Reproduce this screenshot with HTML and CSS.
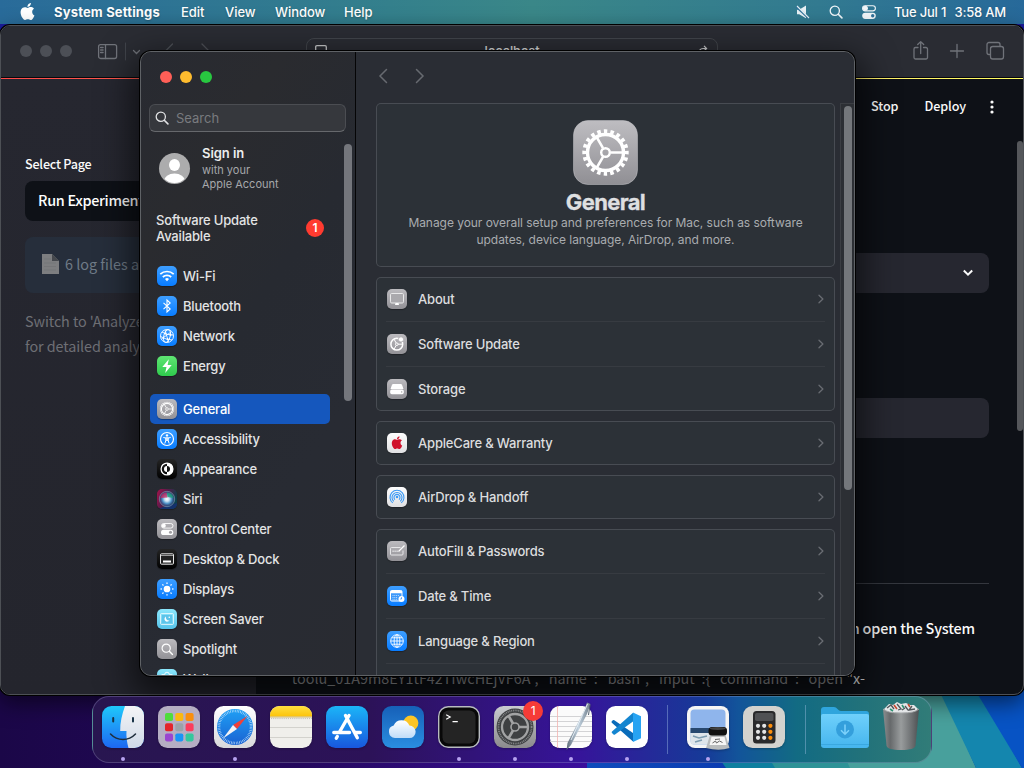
FILE: index.html
```html
<!DOCTYPE html>
<html lang="en">
<head>
<meta charset="utf-8">
<title>System Settings</title>
<link rel="stylesheet" href="styles.css">
</head>
<body>
<svg class="defs" width="0" height="0">
  <defs>
    <linearGradient id="gray" x2="0" y2="1"><stop offset="0" stop-color="#bebdc1"/><stop offset="1" stop-color="#908f94"/></linearGradient>
    <linearGradient id="steel" x2="0" y2="1"><stop offset="0" stop-color="#c9ccd0"/><stop offset="1" stop-color="#8b8a8c"/></linearGradient>
    <linearGradient id="finder" x2="0" y2="1"><stop offset="0" stop-color="#1fc8fb"/><stop offset="1" stop-color="#1d67f2"/></linearGradient>
    <linearGradient id="face" x2="0" y2="1"><stop offset="0" stop-color="#f4f4f6"/><stop offset="1" stop-color="#cfdae8"/></linearGradient>
    <linearGradient id="white" x2="0" y2="1"><stop offset="0" stop-color="#fff"/><stop offset="1" stop-color="#d8d8da"/></linearGradient>
    <linearGradient id="sea" x2="0" y2="1"><stop offset="0" stop-color="#1fa0f5"/><stop offset="1" stop-color="#1a62d2"/></linearGradient>
    <linearGradient id="store" x2="0" y2="1"><stop offset="0" stop-color="#1bb5f8"/><stop offset="1" stop-color="#1857dd"/></linearGradient>
    <linearGradient id="sky" x2="0" y2="1"><stop offset="0" stop-color="#1660b8"/><stop offset="1" stop-color="#2a8ee0"/></linearGradient>
    <linearGradient id="note" x2="0" y2="1"><stop offset="0" stop-color="#ffdf3f"/><stop offset="1" stop-color="#fcc30b"/></linearGradient>
    <linearGradient id="folder" x2="0" y2="1"><stop offset="0" stop-color="#6fd0fb"/><stop offset="1" stop-color="#45b5ee"/></linearGradient>
    <linearGradient id="bin"><stop offset="0" stop-color="#8b8e90"/><stop offset=".2" stop-color="#66696b"/><stop offset=".5" stop-color="#999c9d"/><stop offset=".8" stop-color="#6c6f71"/><stop offset="1" stop-color="#4d5052"/></linearGradient>
    <linearGradient id="cloud" x2="0" y2="1"><stop offset="0" stop-color="#fff"/><stop offset="1" stop-color="#bfdcf8"/></linearGradient>
    <linearGradient id="pen"><stop offset="0" stop-color="#5d6b78"/><stop offset=".5" stop-color="#c3d3e0"/><stop offset="1" stop-color="#6b7a88"/></linearGradient>
    <radialGradient id="siri"><stop offset="0" stop-color="#fff"/><stop offset=".3" stop-color="#c9dff2"/><stop offset=".6" stop-color="#4f93c8"/><stop offset="1" stop-color="#273b75" stop-opacity=".5"/></radialGradient>
    <linearGradient id="siribg" x2="1" y2=".4"><stop offset="0" stop-color="#a8124b"/><stop offset=".45" stop-color="#5c1a4a"/><stop offset="1" stop-color="#0c3f4c"/></linearGradient>
    <symbol id="apple" viewBox="0 0 24 24"><path d="M12.152 6.896c-.948 0-2.415-1.078-3.96-1.04-2.04.027-3.91 1.183-4.961 3.014-2.117 3.675-.546 9.103 1.519 12.09 1.013 1.454 2.208 3.09 3.792 3.039 1.52-.065 2.09-.987 3.935-.987 1.831 0 2.35.987 3.96.948 1.637-.026 2.676-1.48 3.676-2.948 1.156-1.688 1.636-3.325 1.662-3.415-.039-.013-3.182-1.221-3.22-4.857-.026-3.04 2.48-4.494 2.597-4.559-1.429-2.09-3.623-2.324-4.39-2.376-2-.156-3.675 1.09-4.61 1.09zM15.53 3.83c.843-1.012 1.4-2.427 1.245-3.83-1.207.052-2.662.805-3.532 1.818-.78.896-1.454 2.338-1.273 3.714 1.338.104 2.715-.688 3.559-1.701"/></symbol>
    <symbol id="lens" viewBox="0 0 14 14"><g fill="none" stroke="currentColor" stroke-linecap="round"><circle cx="5.8" cy="5.8" r="4.6" stroke-width="1.3"/><path d="M9.3 9.3l3.6 3.6" stroke-width="1.6"/></g></symbol>
    <symbol id="gear" viewBox="0 0 48 48"><g fill="none" stroke="currentColor"><circle cx="24" cy="24" r="21.2" stroke-width="4" pathLength="40" stroke-dasharray="1.05 .95" stroke-dashoffset=".5"/><circle cx="24" cy="24" r="18" stroke-width="3.4"/><circle cx="24" cy="24" r="4.3" stroke-width="2.4"/><path d="M29 24h13M21.5 19.7L15 8.4M21.5 28.3L15 39.6" stroke-width="2.6"/></g></symbol>
    <symbol id="globe" viewBox="0 0 20 20"><g fill="none" stroke="#fff" stroke-width=".9"><circle cx="10" cy="10" r="6.3"/><ellipse cx="10" cy="10" rx="2.9" ry="6.3"/><path d="M10 3.7v12.6M3.7 10h12.6M4.8 6.8h10.4M4.8 13.2h10.4"/></g></symbol>
    <symbol id="switches" viewBox="0 0 14 14"><rect x=".6" y=".7" width="12.800" height="5.200" rx="2.600" fill="none" stroke="currentColor" stroke-width="1.100"/><circle cx="3.400" cy="3.300" r="2.500" fill="currentColor"/><rect x=".2" y="7.700" width="13.600" height="6.200" rx="3.100" fill="currentColor"/><circle cx="10.700" cy="10.800" r="1.700" fill="#30729a"/></symbol>
    <symbol id="chev" viewBox="0 0 8 12"><path d="M2 2.200L5.900 6 2 9.800" fill="none" stroke="currentColor" stroke-width="1.3" stroke-linecap="round" stroke-linejoin="round"/></symbol>
  </defs>
</svg>

<div class="desktop">
  <svg class="wallpaper" viewBox="0 0 1024 768">
    <defs>
      <linearGradient id="wl"><stop offset="0" stop-color="#1b0748"/><stop offset=".5" stop-color="#24085c"/><stop offset="1" stop-color="#3c0fa0"/></linearGradient>
      <linearGradient id="wm"><stop offset="0" stop-color="#0f4cbc"/><stop offset="1" stop-color="#0b3bb0"/></linearGradient>
    </defs>
    <rect width="1024" height="768" fill="#1b1c9c"/>
    <rect y="600" width="600" height="168" fill="url(#wl)"/>
    <path d="M587 600v168h150l-60-168z" fill="url(#wm)"/>
    <path d="M650 660l76 108h60l-50-108z" fill="#0e7f9f"/>
    <path d="M700 640l75 128h100l-70-128z" fill="#2e9397"/>
    <path d="M790 640l60 128h126L920 640z" fill="#48a09c"/>
    <path d="M915 640l61 128h46l-70-128z" fill="#1486ae"/>
    <path d="M945 640l77 128h2V600z" fill="#0753c4"/>
  </svg>

  <header class="menubar">
    <div class="menus">
      <svg class="logo" fill="#fff"><use href="#apple"/></svg>
      <b class="app">System Settings</b><span class="m1">Edit</span><span class="m2">View</span><span class="m3">Window</span><span class="m4">Help</span>
    </div>
    <div class="status">
      <svg width="14" height="14" viewBox="0 0 14 14"><path d="M1 4.7h2.2L10 .6v12.6L3.2 9.3H1z" fill="#e8f1f5"/><path d="M.3 1.7l12.4 11.6" stroke="#30729a" stroke-width="2.2"/><path d="M1 1l12 12" stroke="#e8f1f5" stroke-width="1.1"/></svg>
      <svg width="14" height="14" color="#f1f6f9"><use href="#lens"/></svg>
      <svg width="14" height="14" color="#f1f6f9"><use href="#switches"/></svg>
      <span class="clock"><span>Tue Jul 1</span><span>3:58 AM</span></span>
    </div>
  </header>

  <section class="browser">
    <div class="toolbar">
      <div class="dots"><i></i><i></i><i></i></div>
      <svg class="nav" width="130" height="24" viewBox="0 0 130 24" fill="none" stroke="#70737a" stroke-width="1.3" stroke-linecap="round"><rect x="1.6" y="4.600" width="18" height="13.900" rx="2"/><path d="M8.500 4.600v13.900M3.600 7.500h2.500M3.600 10h2.500M3.600 12.500h2.500"/><path d="M28.500 3v17" stroke="#41444b" stroke-width="1"/><path d="M36.500 10.500l3 3 3-3"/><path d="M75.500 4l-7 7 7 7M105 4l7 7-7 7" stroke="#4f5259"/></svg>
      <div class="address"><svg width="12" height="12" viewBox="0 0 12 12" fill="none" stroke="#c9cacc" stroke-width="1.3"><rect x=".7" y=".7" width="10.600" height="8" rx="1.200"/></svg><span>localhost</span><svg width="12" height="12" viewBox="0 0 12 12" fill="none" stroke="#c9cacc" stroke-width="1.200"><path d="M10.500 6.800A4.500 4.500 0 1 1 6 3.500h3M7 .8l2.600 2.700L7 6"/></svg></div>
      <svg class="tools" width="96" height="24" viewBox="0 0 96 24" fill="none" stroke="#70737a" stroke-width="1.300" stroke-linecap="round" stroke-linejoin="round"><path d="M6 7.500H3.500a1.500 1.500 0 0 0-1.500 1.500v8.500a1.500 1.500 0 0 0 1.500 1.500h10.500a1.500 1.500 0 0 0 1.500-1.500V9a1.500 1.500 0 0 0-1.500-1.500h-2.500M8.700 13.500V1.800M5.700 4.500l3-2.900 3 2.900M45 4.500v13M38.500 11h13"/><rect x="78.500" y="6.500" width="13" height="12.500" rx="2.200"/><path d="M78 14.500h-1a2 2 0 0 1-2-2v-8a2 2 0 0 1 2-2h9a2 2 0 0 1 2 2v1.500"/></svg>
    </div>
    <div class="page">
      <aside class="side">
        <label>Select Page</label>
        <div class="pick">Run Experiment</div>
        <div class="info"><svg width="17" height="20" viewBox="0 0 17 20"><path d="M0 0h10l7 7v13H0z" fill="#7d7e80"/><path d="M10 0v7h7z" fill="#45484d"/><path d="M2 5h7M2 9h12M2 12.500h12M2 16h12" stroke="#757678"/></svg><span>6 log files available</span></div>
        <p>Switch to 'Analyze Logs'<br>for detailed analysis</p>
      </aside>
      <main class="main">
        <div class="actions"><span>Stop</span><span>Deploy</span><svg width="4" height="14" viewBox="0 0 4 14" fill="#fafafa"><circle cx="2" cy="2" r="1.600"/><circle cx="2" cy="7" r="1.600"/><circle cx="2" cy="12" r="1.600"/></svg></div>
        <div class="field first"><svg width="12" height="8" viewBox="0 0 12 8"><path d="M1.800 1.500L6 5.700l4.200-4.200" fill="none" stroke="#fafafa" stroke-width="2"/></svg></div>
        <div class="field second"></div>
        <hr>
        <p class="msg">then open the System</p>
        <p class="code"><span>"toolu_01A9m8EY1tF42TfwcHEjVF6A", "name": "bash", "input":{ "command": "open </span><b>"x-</b></p>
      </main>
      <div class="pagebar"></div>
    </div>
  </section>

  <section class="settings">
    <aside class="sidebar">
      <div class="lights"><i></i><i></i><i></i></div>
      <div class="search"><svg width="14" height="14" color="#e0e1e3"><use href="#lens"/></svg><span>Search</span></div>
      <div class="scroll">
        <div class="list">
          <div class="account"><svg width="31" height="31" viewBox="0 0 31 31"><defs><clipPath id="av"><circle cx="15.500" cy="15.500" r="14.500"/></clipPath></defs><circle cx="15.500" cy="15.500" r="15.500" fill="#acacad"/><g fill="#fff" clip-path="url(#av)"><ellipse cx="15.500" cy="12" rx="5.500" ry="6"/><ellipse cx="15.500" cy="28" rx="10.500" ry="7.500"/></g></svg><div><b>Sign in</b><span>with your</span><span>Apple Account</span></div></div>
          <div class="update"><span>Software Update<br>Available</span><em>1</em></div>
          <ul>
            <li><svg class="ic blue" viewBox="0 0 20 20" fill="none" stroke="#fff" stroke-width="1.700"><path d="M3.300 8.200a9.600 9.600 0 0 1 13.400 0M5.800 11a6.200 6.200 0 0 1 8.400 0"/><path d="M10 15.200l-2-2.200a3 3 0 0 1 4 0z" fill="#fff" stroke="none"/></svg><span>Wi-Fi</span></li>
            <li><svg class="ic blue" viewBox="0 0 20 20" fill="none" stroke="#fff" stroke-width="1.100"><path d="M6.500 6.800l6.700 6.200L10 16V4l3.200 3-6.700 6.200"/></svg><span>Bluetooth</span></li>
            <li><svg class="ic blue" viewBox="0 0 20 20"><g fill="none" stroke="#fff" stroke-width=".9"><circle cx="10" cy="10" r="6.500"/><ellipse cx="10" cy="10" rx="3.200" ry="6.500" transform="rotate(15 10 10)"/><path d="M5 6q4 3 11 3M3.600 10.500q6 3.500 11.500 3.500M8 4l3.500 12M4.500 13l9.500-7"/></g><g fill="#fff"><circle cx="8.500" cy="7.500" r="1"/><circle cx="13.500" cy="9" r="1"/><circle cx="10.500" cy="13" r="1"/></g></svg><span>Network</span></li>
            <li><svg class="ic green" viewBox="0 0 20 20"><path d="M11.800 3.200L5.300 11h4.200l-1.300 6 6.500-8h-4.100z" fill="#fff"/></svg><span>Energy</span></li>
          </ul>
          <ul>
            <li class="on"><svg class="ic gray" viewBox="0 0 20 20" color="#fff"><use href="#gear" x="2.500" y="2.500" width="15" height="15"/></svg><span>General</span></li>
            <li><svg class="ic blue" viewBox="0 0 20 20"><circle cx="10" cy="10" r="6.500" fill="none" stroke="#fff" stroke-width="1.200"/><circle cx="10" cy="6.400" r="1.200" fill="#fff"/><path d="M6.300 8.500l2.700.5v2l-1.200 3.500M13.700 8.500l-2.700.5v2l1.200 3.500M9 8.800h2v2.500H9z" fill="none" stroke="#fff"/></svg><span>Accessibility</span></li>
            <li><svg class="ic black" viewBox="0 0 20 20"><circle cx="10" cy="10" r="5.900" fill="none" stroke="#fff" stroke-width="1.300"/><path d="M10 4.100a5.900 5.900 0 0 1 0 11.800z" fill="#fff"/><path d="M10 7a3 3 0 0 0 0 6z" fill="#fff"/><path d="M10 7a3 3 0 0 1 0 6z" fill="#111"/></svg><span>Appearance</span></li>
            <li><svg class="ic" viewBox="0 0 20 20"><rect width="20" height="20" fill="url(#siribg)"/><path d="M0 20h20v-6z" fill="#14316c"/><circle cx="10" cy="10" r="7.700" fill="url(#siri)"/><path d="M3.500 9a7 7 0 0 1 6-5.500l1 5z" fill="#c8285e" opacity=".75"/><path d="M10 3.500a7 7 0 0 1 6.500 5.500l-6-1z" fill="#1d9c77" opacity=".8"/><circle cx="10" cy="10" r="7.700" fill="none" stroke="#8aa6b8" stroke-width=".6"/></svg><span>Siri</span></li>
            <li><svg class="ic gray" viewBox="0 0 20 20"><rect x="4.500" y="4.500" width="11.500" height="4.600" rx="2.300" fill="none" stroke="#fff" stroke-width=".9"/><circle cx="6.800" cy="6.800" r="2" fill="#fff"/><rect x="4" y="10.700" width="12.300" height="5.300" rx="2.600" fill="#fff"/><circle cx="13.500" cy="13.300" r="1.500" fill="#a09fa3"/></svg><span>Control Center</span></li>
            <li><svg class="ic black" viewBox="0 0 20 20"><rect x="3.500" y="4.800" width="13" height="10.400" rx="1" fill="#222" stroke="#e5e5e5"/><path d="M4 6.500h12" stroke="#999"/><path d="M6 12.500h8" stroke="#fff" stroke-width="2"/></svg><span>Desktop &amp; Dock</span></li>
            <li><svg class="ic blue" viewBox="0 0 20 20" stroke="#fff" stroke-width="1.300" stroke-linecap="round"><circle cx="10" cy="10" r="2.700" fill="#fff"/><path d="M10 4v.4M10 15.600v.4M4 10h.4M15.600 10h.4M5.800 5.800l.3.300M13.900 13.900l.3.300M5.800 14.200l.3-.3M13.900 6.100l.3-.3"/></svg><span>Displays</span></li>
            <li><svg class="ic cyan" viewBox="0 0 20 20"><rect x="3.600" y="4.600" width="12.800" height="10.800" rx=".8" fill="none" stroke="#fff" stroke-width=".8"/><rect x="5" y="6" width="10" height="8" fill="#5cc4ea"/><path d="M9 7.500a2.700 2.700 0 1 0 3.500 3.800A2.900 2.900 0 0 1 9 7.500z" fill="#fff"/><circle cx="12.300" cy="8.300" r=".8" fill="#fff"/></svg><span>Screen Saver</span></li>
            <li><svg class="ic gray" viewBox="0 0 20 20" color="#fff"><use href="#lens" x="4" y="4" width="12.500" height="12.500"/></svg><span>Spotlight</span></li>
            <li><svg class="ic cyan" viewBox="0 0 20 20" fill="none" stroke="#fff" stroke-width=".9"><circle cx="10" cy="10" r="2"/><circle cx="10" cy="5.500" r="2.300"/><circle cx="6" cy="7.800" r="2.300"/><circle cx="14" cy="7.800" r="2.300"/></svg><span>Wallpaper</span></li>
          </ul>
        </div>
        <div class="thumb"></div>
      </div>
    </aside>

    <div class="content">
      <nav><svg width="10" height="16" viewBox="0 0 10 16"><path d="M8.500 1.500L2 8l6.500 6.500" fill="none" stroke="#676a70" stroke-width="1.500" stroke-linecap="round"/></svg><svg width="10" height="16" viewBox="0 0 10 16"><path d="M1.500 1.500L8 8l-6.500 6.500" fill="none" stroke="#676a70" stroke-width="1.500" stroke-linecap="round"/></svg></nav>
      <div class="body">
        <div class="cards">
          <div class="card hero"><svg width="65" height="65" viewBox="0 0 65 65" color="#fff"><rect x=".5" y=".5" width="64" height="64" rx="14.500" fill="url(#gray)" stroke="#c6c5c9" stroke-opacity=".5"/><use href="#gear" x="8.500" y="8.500" width="48" height="48"/></svg><h1>General</h1><p>Manage your overall setup and preferences for Mac, such as software<br><span>updates, device language, AirDrop, and more.</span></p></div>
          <div class="card">
            <div class="row"><svg class="ic gray" viewBox="0 0 20 20"><rect x="3.500" y="4.500" width="13" height="9.500" rx="1.200" fill="#aaa9ad" stroke="#e9e9ea" stroke-width="1"/><path d="M8.500 14h3l.5 2h-4z" fill="#fff"/></svg><span>About</span><svg class="go"><use href="#chev"/></svg></div>
            <div class="row"><svg class="ic gray" viewBox="0 0 20 20" fill="none" stroke="#fff"><circle cx="9.800" cy="10.200" r="5.900" stroke-width="1.500"/><circle cx="9.800" cy="10.200" r="1.300"/><path d="M11 10.200h4M9.200 9L7 5.200M9.200 11.400L7 15.200"/><circle cx="14" cy="5.400" r="2.600" fill="#fff" stroke="#a9a8ac" stroke-width=".8"/></svg><span>Software Update</span><svg class="go"><use href="#chev"/></svg></div>
            <div class="row"><svg class="ic gray" viewBox="0 0 20 20"><path d="M6.200 5h7.600q.8 0 1.200.8L16.500 10H3.500L5 5.800Q5.400 5 6.200 5z" fill="#fff"/><rect x="3.200" y="10.500" width="13.600" height="4.700" rx="1.600" fill="#fff"/><circle cx="14.700" cy="12.900" r=".7" fill="#999"/></svg><span>Storage</span><svg class="go"><use href="#chev"/></svg></div>
          </div>
          <div class="card"><div class="row"><svg class="ic pale" viewBox="0 0 20 20" fill="#d0122c"><use href="#apple" x="3.600" y="3.200" width="12.800" height="12.800"/></svg><span>AppleCare &amp; Warranty</span><svg class="go"><use href="#chev"/></svg></div></div>
          <div class="card"><div class="row"><svg class="ic pale" viewBox="0 0 20 20" fill="none" stroke="#3b9af5" stroke-width="1.100"><circle cx="10" cy="10" r="1.300" fill="#3b9af5" stroke="none"/><path d="M8 12.600a3 3 0 1 1 4 0M6.800 14.300a5 5 0 1 1 6.400 0M5.800 15.900a7 7 0 1 1 8.400 0"/></svg><span>AirDrop &amp; Handoff</span><svg class="go"><use href="#chev"/></svg></div></div>
          <div class="card">
            <div class="row"><svg class="ic gray" viewBox="0 0 20 20" fill="none" stroke="#e6e6e8"><path d="M13.500 6.500h-9q-1 0-1 1v5.500q0 1 1 1h10.500q1 0 1-1v-3.500"/><path d="M5.500 10.300h6" stroke-width="1.600" stroke-dasharray="1.200 .8"/><path d="M17.500 4.500l-6 6" stroke="#fff" stroke-width="1.300"/></svg><span>AutoFill &amp; Passwords</span><svg class="go"><use href="#chev"/></svg></div>
            <div class="row"><svg class="ic blue" viewBox="0 0 20 20"><rect x="3.500" y="4.500" width="11.500" height="10.500" rx="1.200" fill="#3d98fa" stroke="#fff" stroke-width="1"/><path d="M3.500 6h11.500" stroke="#fff" stroke-width="2.500"/><path d="M5.500 9.500h7M5.500 11.500h5M5.500 13.300h5" stroke="#b5dafd" stroke-width="1" stroke-dasharray="1 .8"/><circle cx="14.500" cy="13" r="3" fill="#fff"/><path d="M14.500 11.200V13h-1.300" fill="none" stroke="#1683fc" stroke-width=".7"/></svg><span>Date &amp; Time</span><svg class="go"><use href="#chev"/></svg></div>
            <div class="row"><svg class="ic blue" viewBox="0 0 20 20"><use href="#globe"/></svg><span>Language &amp; Region</span><svg class="go"><use href="#chev"/></svg></div>
            <div class="row"></div>
          </div>
        </div>
        <div class="track"><div></div></div>
      </div>
    </div>
  </section>

  <footer class="dock">
    <div class="tile run"><svg viewBox="0 0 42 42"><defs><clipPath id="r"><rect width="42" height="42" rx="9.500"/></clipPath></defs><g clip-path="url(#r)"><rect width="42" height="42" fill="url(#finder)"/><path d="M23 0c-3 8-5 17-4.800 25h6.300c-.5 5 .5 12 2 17H42V0z" fill="url(#face)"/></g><path d="M11.200 12v3.500M31 12v3.500" stroke="#173246" stroke-width="2" stroke-linecap="round"/><path d="M8.500 28c7 7.300 18 7.300 25 0" fill="none" stroke="#1e2e3c" stroke-width="1.500" stroke-linecap="round"/></svg></div>
    <div class="tile"><svg viewBox="0 0 42 42"><rect width="42" height="42" rx="9.500" fill="#b5aec3"/><g><rect x="7" y="7" width="8" height="8" rx="1.800" fill="#4fdc3c"/><rect x="17.300" y="7" width="8" height="8" rx="1.800" fill="#fbb810"/><rect x="27.600" y="7" width="8" height="8" rx="1.800" fill="#f98f0e"/><rect x="7" y="17.200" width="8" height="8" rx="1.800" fill="#e3242a"/><rect x="17.300" y="17.200" width="8" height="8" rx="1.800" fill="#9ca2a8"/><rect x="27.600" y="17.200" width="8" height="8" rx="1.800" fill="#fb3d5c"/><rect x="7" y="27.400" width="8" height="8" rx="1.800" fill="#9a46d0"/><rect x="17.300" y="27.400" width="8" height="8" rx="1.800" fill="#1a94f5"/><rect x="27.600" y="27.400" width="8" height="8" rx="1.800" fill="#34c79c"/></g></svg></div>
    <div class="tile run"><svg viewBox="0 0 42 42"><rect width="42" height="42" rx="9.500" fill="url(#white)"/><circle cx="21" cy="21" r="18" fill="url(#sea)"/><circle cx="21" cy="21" r="16" fill="none" stroke="#c5e3fb" stroke-width="2.600" stroke-dasharray=".6 1.070"/><path d="M33.500 10L19 19l4 4z" fill="#f04038"/><path d="M9 32.500L19 19l4 4z" fill="#f3f3f5"/></svg></div>
    <div class="tile"><svg viewBox="0 0 42 42"><g clip-path="url(#r)"><rect width="42" height="42" fill="#f0efeb"/><rect width="42" height="10.500" fill="url(#note)"/><path d="M0 11h42" stroke="#c9a94c" stroke-width=".8"/><path d="M1 12.600h41" stroke="#b5b3ac" stroke-width=".9" stroke-dasharray=".9 1"/><path d="M0 21.500h42M0 31.500h42" stroke="#cfcec9" stroke-width=".9"/></g></svg></div>
    <div class="tile"><svg viewBox="0 0 42 42"><rect width="42" height="42" rx="9.500" fill="url(#store)"/><g fill="none" stroke="#fff" stroke-width="3.400" stroke-linecap="round"><path d="M19.500 9.500l11.800 22.300M23 9.500L13.500 26M7.800 26.500h15.700M29.500 26.500h4.800M11.300 30.500l-1 1.700"/></g></svg></div>
    <div class="tile"><svg viewBox="0 0 42 42"><rect width="42" height="42" rx="9.500" fill="url(#sky)"/><circle cx="28.800" cy="17" r="7.600" fill="#fcc526"/><path d="M13 32a6.300 6.300 0 0 1-1.300-12.400 8.500 8.500 0 0 1 15.700 0A6.200 6.200 0 0 1 27.500 32z" fill="url(#cloud)"/></svg></div>
    <div class="tile run"><svg viewBox="0 0 42 42"><rect x=".7" y=".7" width="40.600" height="40.600" rx="9.500" fill="#080808" stroke="#b8bcc0" stroke-width="1.400"/><rect x="4.500" y="4.500" width="33" height="33" rx="6" fill="#242424"/><path d="M8.200 8.700l4 2.300-4 2.300M14.500 15.700h5.300" fill="none" stroke="#fff" stroke-width="1.200"/></svg></div>
    <div class="tile run"><svg viewBox="0 0 42 42"><rect width="42" height="42" rx="9.500" fill="url(#steel)"/><circle cx="21" cy="21" r="18.500" fill="#3e4042"/><g fill="none" stroke="#a2a3a4"><circle cx="21" cy="21" r="16.600" stroke-width="1.800" stroke-dasharray="1 .8" stroke="#838587"/><circle cx="21" cy="21" r="13" stroke-width="2.300"/><circle cx="21" cy="21" r="4" stroke-width="1.600"/><path d="M25 21h9M19 17.500l-4.600-8M19 24.500l-4.600 8" stroke-width="2.600"/></g></svg><em>1</em></div>
    <div class="tile run"><svg viewBox="0 0 42 42"><rect width="42" height="42" rx="9.500" fill="#fbfbfb"/><path d="M0 10.500h42M0 15.500h42M0 20.500h42M0 25.500h42M0 30.500h42M0 35.500h42" stroke="#c9c9cb" stroke-width=".8"/><path d="M7.500 0v42" stroke="#f4b4b0" stroke-width=".8"/><path d="M37 -3.500l3.500 1.500L37 8 21 39l-4.500 5 1-7L34 5z" fill="url(#pen)"/><path d="M37.500-2L21 34" stroke="#e9f1f7" stroke-width=".9"/><path d="M40-1l-1.500 10" stroke="#55626f" stroke-width="1"/></svg></div>
    <div class="tile run"><svg viewBox="0 0 42 42"><rect width="42" height="42" rx="9.500" fill="#fff"/><path d="M8.300 14.300q-.7-.6-1.500 0l-1 1q-.7.800 0 1.500L27 35.500V27z" fill="#0a6cba"/><path d="M6 25.500q-.8.800 0 1.600l1.500 1.300q.8.500 1.500 0L27 15.500V6.800z" fill="#1485d0"/><path d="M27 6.500l8 3.800v22L27 36z" fill="#27a3f2"/></svg></div>
    <div class="sep s1"></div>
    <div class="tile run"><svg viewBox="0 0 42 42"><rect width="42" height="42" rx="8" fill="#f5f5f5"/><rect x="3.500" y="3.500" width="35" height="35" rx="4" fill="#8fb5ec"/><path d="M3.500 22h35v5h-35z" fill="#28486f"/><path d="M3.500 27h35v8q0 3.500-3.500 3.500H7Q3.500 38.500 3.500 35z" fill="#dfe5ea"/><path d="M6 30l6 2 8-2M8 36l7-2" fill="none" stroke="#7d9cb0" stroke-width="1.500"/><path d="M23 29h15.500l4 13q-10.500 3.500-23.500 0z" fill="#b9bcbd"/><path d="M24.500 31h13l2 8H22.500z" fill="#f5f5f5"/><path d="M25.500 37l3-2 1 2 3-2 3 1.500M28 33.500l5-.5" fill="none" stroke="#666"/><rect x="21.500" y="21" width="18.500" height="8.500" rx="3.500" fill="#111"/><ellipse cx="30.700" cy="22.500" rx="8" ry="1.400" fill="#444"/></svg></div>
    <div class="tile"><svg viewBox="0 0 42 42"><rect width="42" height="42" rx="9.500" fill="#d3d2ce"/><rect x="10" y="5" width="22.500" height="32.500" rx="3.500" fill="#2a2a2b"/><rect x="12" y="7" width="18.500" height="8" rx="1.800" fill="#505153"/><g fill="#e4e4e4"><circle cx="15" cy="19.800" r="2.100"/><circle cx="21.200" cy="19.800" r="2.100"/><circle cx="15" cy="25.800" r="2.100"/><circle cx="21.200" cy="25.800" r="2.100"/><circle cx="15" cy="31.800" r="2.100"/><circle cx="21.200" cy="31.800" r="2.100"/></g><g fill="#fc8e0c"><circle cx="27.400" cy="19.800" r="2.100"/><circle cx="27.400" cy="25.800" r="2.100"/><circle cx="27.400" cy="31.800" r="2.100"/></g></svg></div>
    <div class="sep s2"></div>
    <div class="folder"><svg width="48" height="42" viewBox="0 0 48 42"><path d="M0 4q0-3 3-3h10q2 0 3.500 2t3.500 2h25q3 0 3 3v10H0z" fill="#2fa5dd"/><path d="M0 10q0-2 2-2h44q2 0 2 2v29q0 3-3 3H3q-3 0-3-3z" fill="url(#folder)"/><path d="M0 38.500h48" stroke="#3aa8e0"/><circle cx="24" cy="23.500" r="9" fill="#349fdc"/><path d="M24 18.500v9.500M20 24.300l4 4 4-4" fill="none" stroke="#7dd2fb" stroke-width="1.500"/></svg></div>
    <div class="trash"><svg width="38" height="49" viewBox="0 0 38 49"><path d="M1 7l3.500 36.500Q5 48 19 48t14.500-4.500L37 7z" fill="url(#bin)"/><path d="M2 7l3-3 2-2 4 1 4-3 4 2 5-1 4 2 4 0 4 4q-2 4-17 4T2 7z" fill="#e4e6e8"/><path d="M5 6l4-3 3 4M15 2l4 5-3 1M23 4l3 4M30 4l-3 4 6-1M20 8l3-2" fill="none" stroke="#51565a" stroke-width="1.300"/><path d="M12 3l3 4M26 2l2 3" stroke="#c5472f" stroke-width="1.600"/><path d="M8 7l3 2M20 3l2 3" stroke="#2f9273" stroke-width="1.600"/><path d="M1 7q4 4 18 4t18-4" fill="none" stroke="#a4a7a9"/></svg></div>
  </footer>
</div>
</body>
</html>
```
FILE: styles.css
```css
* { box-sizing: border-box; }
body { margin: 0; background: #000; font: 500 13px/16px Inter, "Liberation Sans", sans-serif; letter-spacing: -.18px; color: #e3e4e5; overflow: hidden; }
p, h1, ul { margin: 0; padding: 0; }
ul { list-style: none; }
svg { display: block; flex: none; overflow: visible; }
.defs { position: absolute; }
.desktop { position: relative; width: 1024px; height: 768px; overflow: hidden; white-space: nowrap; }
.wallpaper { position: absolute; inset: 0; width: 1024px; height: 768px; }

.menubar { position: absolute; inset: 0 0 auto; height: 24px; display: flex; justify-content: space-between; align-items: center; padding: 0 18px 0 19px; background: linear-gradient(90deg, #296b9a, #34808c 38%, #3a8788 52%, #327a90 80%, #27699a); color: #fff; text-shadow: 0 1px 2px rgba(0, 0, 0, .25); }
.menus, .status { display: flex; align-items: center; letter-spacing: -.05px; }
.logo { width: 17px; height: 17px; margin: -1px 18px 0 0; }
.menus span, .menus b { margin-right: 21px; }
.app { font-weight: 700; width: 106px; letter-spacing: .17px; }
.m1 { width: 23px; } .m2 { width: 29px; } .m3 { width: 48px; } .m4 { width: 28px; }
.status svg { margin-right: 19px; }
.clock { display: flex; justify-content: space-between; width: 112px; letter-spacing: -.2px; margin-left: -1px; }

.browser { position: absolute; left: 0; top: 25px; width: 1024px; height: 670px; border: 1px solid #4d5055; border-radius: 10px; overflow: hidden; background: #0e1117; box-shadow: 0 0 0 1px #000, 0 8px 22px rgba(0, 0, 0, .55); }
.toolbar { height: 52px; display: flex; align-items: center; background: #2a2c33; border-bottom: 1px solid #08090b; padding: 0 15px 0 19px; }
.dots, .lights { display: flex; gap: 8px; }
.dots { margin-top: -1px; }
.dots i, .lights i { width: 12px; height: 12px; border-radius: 50%; background: #4c4f56; }
.nav { margin-left: 25px; }
.address { display: flex; justify-content: space-between; width: 412px; height: 28px; margin-left: 79px; padding: 6px 8px 0; border: 1px solid #42454b; border-radius: 8px; color: #d7d8d9; }
.address span { margin-top: -2px; }
.tools { margin-left: auto; }
.page { display: flex; height: 616px; border-top: 1px solid; border-image: linear-gradient(90deg, #ff4b4b, #ff5a4d 15%, #fff06a 85%, #fffd60) 1; font-family: "Noto Sans CJK SC", "Noto Sans", sans-serif; letter-spacing: -.05px; }
.side { width: 255px; background: linear-gradient(#262730, #24252d); padding: 74px 0 0 24px; overflow: hidden; flex: none; }
.side label { display: block; font-size: 12.6px; line-height: 22px; margin-bottom: 6px; letter-spacing: -.22px; color: #fafafa; }
.pick { height: 40px; border-radius: 8px; background: #0e1117; line-height: 38px; padding-left: 13px; font-size: 14.4px; letter-spacing: -.3px; color: #fff; }
.info { height: 56px; margin: 16px 0 15px; border-radius: 8px; background: #262e3b; display: flex; align-items: center; gap: 6px; padding: 0 0 2px 17px; font-size: 14.4px; font-weight: 400; letter-spacing: 0; color: #6f7b87; }
.side p { font-size: 14.4px; font-weight: 400; letter-spacing: -.1px; line-height: 25px; color: #6e6f75; }
.main { flex: 1; display: flex; flex-direction: column; margin-right: -6px; }
.actions { height: 56px; display: flex; justify-content: flex-end; align-items: center; gap: 26px; padding: 0 29px 2px 0; font-size: 12.6px; letter-spacing: -.1px; color: #fafafa; }
.actions svg { margin: 2px 0 0 -2px; }
.field { width: 733px; height: 40px; border-radius: 8px; background: #262730; display: flex; align-items: center; justify-content: flex-end; padding-right: 15px; }
.first { margin-top: 118px; }
.second { margin-top: 105px; }
hr { width: 733px; height: 1px; margin: 145px 0 0; border: 0; background: #34373e; }
.msg { margin-top: 31px; line-height: 26px; padding-right: 48px; text-align: right; font-size: 14.4px; letter-spacing: -.15px; color: #fafafa; }
.code { margin-top: 24px; padding-left: 29px; line-height: 26px; font-size: 14.4px; font-weight: 400; letter-spacing: 0; color: #9b9c9f; }
.code b { color: #d0d1d3; font-weight: 400; }
.pagebar { width: 6px; height: 290px; flex: none; margin: 62px 0 0; border-radius: 3px; background: #55575b; }

.settings { position: absolute; left: 140px; top: 51px; width: 715px; height: 625px; display: flex; border: 1px solid #5f6266; border-radius: 11px; overflow: hidden; background: #2a2d33; box-shadow: 0 0 0 1px #000, 0 14px 34px 8px rgba(0, 0, 0, .6); }
.sidebar { width: 215px; flex: none; border-right: 1px solid #050506; background: linear-gradient(125deg, #282a31, #2a2b2f 22%, #272a31 45%, #282b33 70%, #292b31); padding: 19px 0 0 8px; }
.lights { padding-left: 11px; }
.lights i:nth-child(1) { background: #ff5f57; } .lights i:nth-child(2) { background: #febc2e; } .lights i:nth-child(3) { background: #28c840; }
.search { width: 197px; height: 28px; margin-top: 21px; display: flex; align-items: center; gap: 7px; padding-left: 5px; border: 1px solid #4b4d52; border-bottom-color: #66686c; border-radius: 6px; background: #36383d; color: #797b7f; font-weight: 400; letter-spacing: 0; }
.scroll { display: flex; padding-top: 12px; }
.list { width: 195px; flex: none; }
.thumb { width: 8px; height: 257px; border-radius: 4px; background: #74767c; }
.account { display: flex; align-items: center; gap: 12px; height: 48px; padding-left: 10px; }
.account div { display: flex; flex-direction: column; }
.account b { line-height: 17px; margin: -1px 0 1px; font-weight: 600; color: #eceded; letter-spacing: -.05px; }
.account span { font: 400 11px/14px Inter, sans-serif; letter-spacing: 0; color: #a6a8ab; }
.update { display: flex; align-items: center; justify-content: space-between; height: 32px; margin-top: 20px; padding: 0 20px 0 7px; }
em { width: 18px; height: 18px; border-radius: 50%; background: #ff3b30; color: #fff; font: 600 12px/18px Inter, sans-serif; text-align: center; }
.scroll ul { margin-top: 13px; }
.update + ul { margin-top: 17px; }
.scroll li { display: flex; align-items: center; gap: 6px; width: 180px; height: 30px; margin-left: 1px; padding-left: 7px; border-radius: 5px; }
.scroll .on { background: #1557bd; color: #fff; }
.ic { width: 20px; height: 20px; border-radius: 5px; overflow: hidden; box-shadow: 0 1px 1px rgba(0, 0, 0, .3); }
.blue { background: linear-gradient(#3d9eff, #087cff); }
.green { background: linear-gradient(#5fe573, #2fcb4d); }
.gray { background: linear-gradient(#bcbbbf, #929196); }
.black { background: linear-gradient(#252525, #000); }
.cyan { background: linear-gradient(#8be6fb, #56c3ea); }
.pale { background: linear-gradient(#fdfdfd, #e0e0e2); }

.content { flex: 1; background: #2a2d34; }
.content nav { height: 51px; padding: 16px 0 0 22px; display: flex; gap: 27px; }
.body { display: flex; justify-content: space-between; height: 573px; }
.cards { width: 459px; margin-left: 20px; display: flex; flex-direction: column; gap: 10px; }
.card { border-radius: 5px; background: #2c3137; box-shadow: inset 0 0 0 1px #484c53; flex: none; }
.hero { height: 164px; padding-top: 17px; display: flex; flex-direction: column; align-items: center; }
.hero h1 { margin-top: 6px; font: 700 22px/22px Inter, sans-serif; letter-spacing: -.65px; color: #dedfe0; -webkit-text-stroke: .3px #dedfe0; }
.hero p { margin-top: 1px; text-align: center; font: 400 12px/17px Inter, sans-serif; letter-spacing: -.045px; color: #a9acaf; }
.row { display: flex; align-items: center; height: 44px; padding: 0 10px 0 11px; color: #dcdddf; }
.row + .row { height: 45px; padding-top: 1px; background: linear-gradient(#373b41, #373b41) 10px 0 / 439px 1px no-repeat; }
.row > span { margin-left: 11px; }
.go { width: 8px; height: 12px; margin-left: auto; color: #696c72; }
.track { width: 14px; border-left: 1px solid #3b3e43; border-top: 1px solid #3b3e43; background: #2c2f34; padding: 2px 0 0 3px; }
.track div { width: 8px; height: 384px; border-radius: 4px; background: #74777b; }

.dock { position: absolute; left: 92px; top: 696px; width: 840px; height: 67px; display: flex; padding: 9px 0 0 9px; border: 1px solid rgba(190, 190, 235, .25); border-radius: 17px; background: linear-gradient(90deg, #281650, #2c1258 33%, #36149a 58%, #163a98 73%, #12549a 77%, #126b83 84%, #22727a 92%, #317c78); }
.tile { position: relative; width: 42px; height: 56px; margin-right: 14px; flex: none; }
.tile svg { width: 42px; height: 42px; filter: drop-shadow(0 1px 1px rgba(0, 0, 0, .25)); }
.run::after { content: ""; position: absolute; left: 19px; top: 51px; width: 4px; height: 4px; border-radius: 50%; background: #b7a2f0; }
.tile em { position: absolute; left: 29px; top: -5px; width: 20px; height: 20px; line-height: 20px; font-weight: 400; background: #f63b37; }
.sep { width: 1px; height: 49px; margin-top: -1px; background: rgba(170, 200, 235, .4); }
.s1 { margin-left: 5px; margin-right: 19px; }
.s2 { margin-left: 6px; margin-right: 15px; }
.folder { width: 48px; }
.trash { margin: -4px 0 0 13px; }
```
